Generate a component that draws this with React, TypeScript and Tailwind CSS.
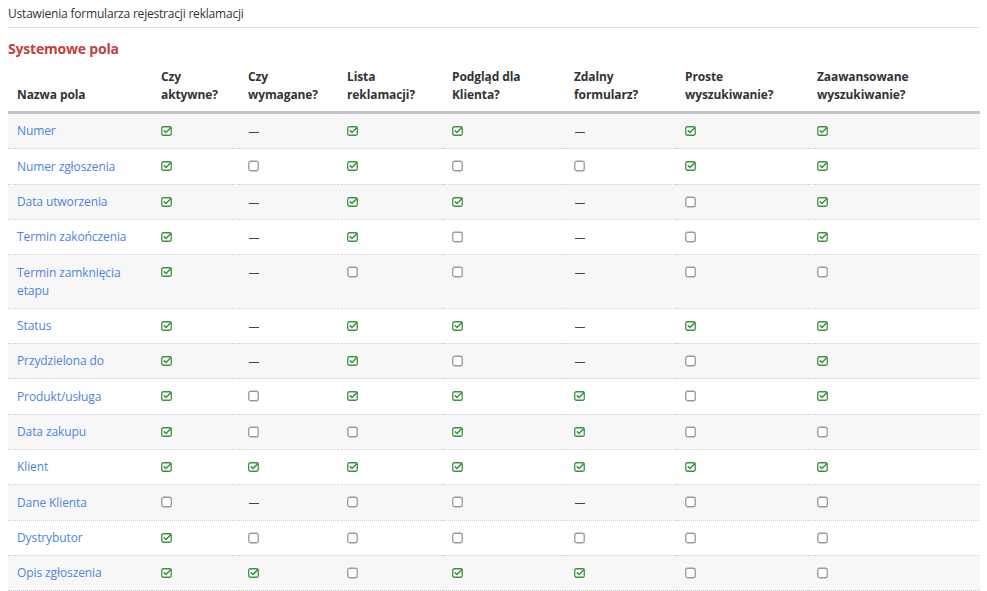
type Cell = "y" | "n" | "-"

interface Row {
  name: string
  cells: Cell[]
}

const columns = [
  { label: ["Nazwa pola"], w: "w-[144px]" },
  { label: ["Czy", "aktywne?"], w: "w-[87px]" },
  { label: ["Czy", "wymagane?"], w: "w-[99px]" },
  { label: ["Lista", "reklamacji?"], w: "w-[105px]" },
  { label: ["Podgląd dla", "Klienta?"], w: "w-[122px]" },
  { label: ["Zdalny", "formularz?"], w: "w-[111px]" },
  { label: ["Proste", "wyszukiwanie?"], w: "w-[132px]" },
  { label: ["Zaawansowane", "wyszukiwanie?"], w: "" },
]

const rows: Row[] = [
  { name: "Numer", cells: ["y", "-", "y", "y", "-", "y", "y"] },
  { name: "Numer zgłoszenia", cells: ["y", "n", "y", "n", "n", "y", "y"] },
  { name: "Data utworzenia", cells: ["y", "-", "y", "y", "-", "n", "y"] },
  { name: "Termin zakończenia", cells: ["y", "-", "y", "n", "-", "n", "y"] },
  { name: "Termin zamknięcia etapu", cells: ["y", "-", "n", "n", "-", "n", "n"] },
  { name: "Status", cells: ["y", "-", "y", "y", "-", "y", "y"] },
  { name: "Przydzielona do", cells: ["y", "-", "y", "n", "-", "n", "y"] },
  { name: "Produkt/usługa", cells: ["y", "n", "y", "y", "y", "n", "y"] },
  { name: "Data zakupu", cells: ["y", "n", "n", "y", "y", "n", "n"] },
  { name: "Klient", cells: ["y", "y", "y", "y", "y", "y", "y"] },
  { name: "Dane Klienta", cells: ["n", "-", "n", "n", "-", "n", "n"] },
  { name: "Dystrybutor", cells: ["y", "n", "n", "n", "n", "n", "n"] },
  { name: "Opis zgłoszenia", cells: ["y", "y", "n", "y", "y", "n", "n"] },
]

function Checked() {
  return (
    <svg width="12" height="12" viewBox="0 0 12 12" className="block">
      <rect x="0.75" y="1.75" width="9.5" height="8.5" rx="1.5" fill="#fff" stroke="#3d9140" strokeWidth="1.3" />
      <path d="M2.8 5.4 L5 7.5 L10.2 2.3" fill="none" stroke="#3d9140" strokeWidth="1.6" />
    </svg>
  )
}

function Unchecked() {
  return (
    <svg width="12" height="12" viewBox="0 0 12 12" className="block">
      <rect x="0.75" y="1.25" width="9.5" height="9.5" rx="2" fill="#fff" stroke="#9a9a9a" strokeWidth="1.3" />
    </svg>
  )
}

function Mark({ v }: { v: Cell }) {
  if (v === "y") return <Checked />
  if (v === "n") return <Unchecked />
  return <div className="w-[10px] h-px bg-[#444] mt-[7px] ml-px" />
}

export default function App() {
  return (
    <div className="px-2 text-[#333] bg-white min-h-[591px]" style={{ fontFamily: '"Open Sans", "Liberation Sans", sans-serif' }}>
      <div className="pt-[5px] pb-[5px] text-[12px] leading-[17px] border-b border-[#ddd] tracking-[-0.2px]">
        Ustawienia formularza rejestracji reklamacji
      </div>
      <h2 className="mt-[11px] text-[14px] leading-[20px] font-bold text-[#c4403c] tracking-[-0.2px]">Systemowe pola</h2>
      <table className="mt-[9px] w-[972px] table-fixed border-collapse text-[12px] leading-[18px] tracking-[-0.1px]">
        <thead>
          <tr className="border-b-[3px] border-[#c4c4c8]">
            {columns.map((c, i) => (
              <th key={i} className={`${c.w} text-left font-bold align-bottom px-[9px] pb-[7px] pt-0`}>
                {c.label.map((l, j) => (
                  <div key={j}>{l}</div>
                ))}
              </th>
            ))}
          </tr>
        </thead>
        <tbody>
          {rows.map((r, i) => (
            <tr key={r.name} className={`border-b border-dotted border-[#cfcfcf] ${i % 2 === 0 ? "bg-[#f7f7f7]" : "bg-white"}`}>
              <td className="px-[9px] pt-[8.33px] pb-[8px] align-top text-[#4f83e0]">{r.name}</td>
              {r.cells.map((c, j) => (
                <td key={j} className="px-[9px] pt-[11px] pb-[8px] align-top">
                  <Mark v={c} />
                </td>
              ))}
            </tr>
          ))}
        </tbody>
      </table>
    </div>
  )
}
